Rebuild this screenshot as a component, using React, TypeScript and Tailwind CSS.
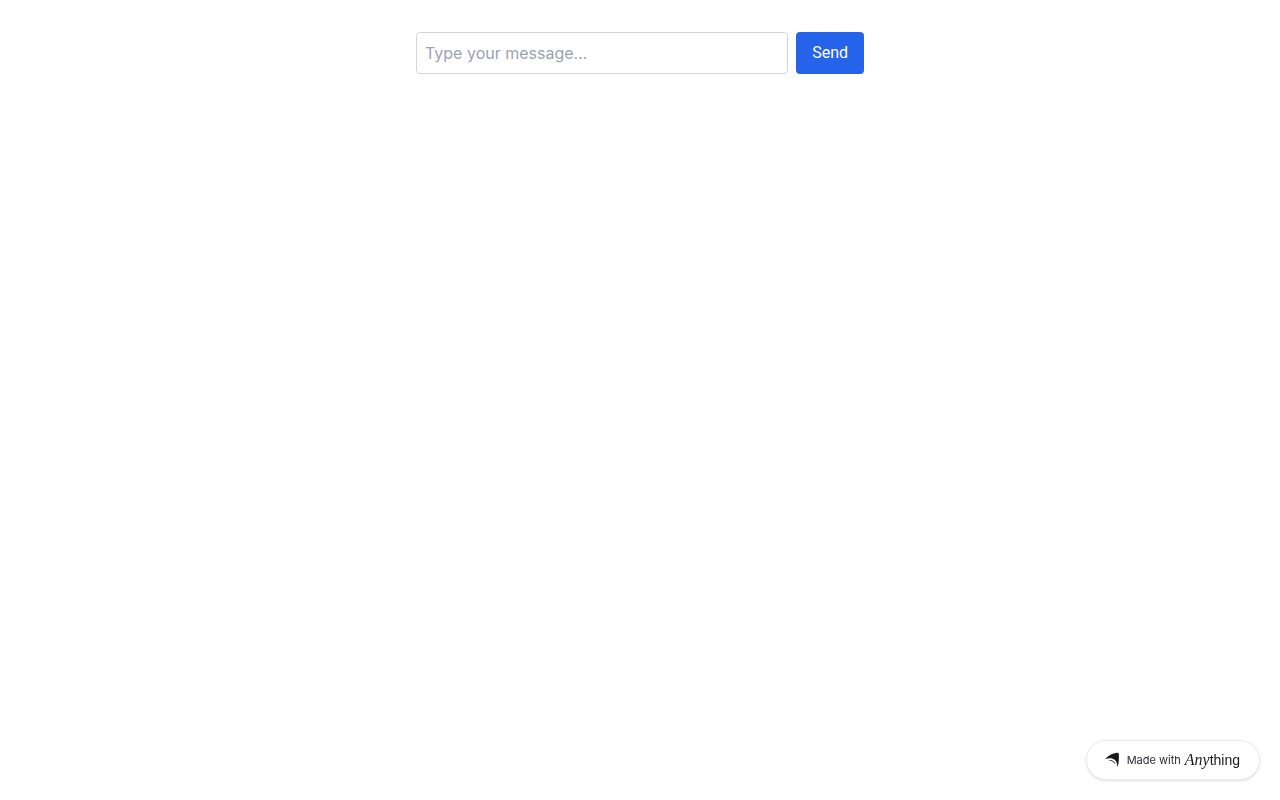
export default function App() {
  return (
    <div className="flex min-h-screen flex-col bg-white font-['Inter',sans-serif]">
      <main className="mx-auto w-full max-w-md grow pt-8">
        <form className="flex gap-2" onSubmit={(e) => e.preventDefault()}>
          <input
            type="text"
            aria-label="Message"
            placeholder="Type your message..."
            className="min-w-0 flex-1 rounded border border-[#d1d5db] bg-white p-2 text-base text-gray-900 placeholder:text-[#9ca3af]"
          />
          <button type="submit" className="rounded bg-[#2563eb] px-4 py-2 font-['Roboto',sans-serif] text-base text-white">
            Send
          </button>
        </form>
      </main>
      <a
        href="#anything"
        className="fixed right-5 bottom-5 flex h-10 items-center rounded-full border border-[#ebebeb] bg-white pr-[19px] pl-[18px] text-[#18191b] shadow-sm"
      >
        <svg viewBox="0 0 14 16" className="mr-2 h-4 w-3.5" fill="currentColor" aria-hidden="true">
          <path d="M0 7C3.2 3.8 7.2 1.2 12 .8Q13.9.6 13.9 2.6C14 7 13.8 11 12.6 15.2C12.2 10.5 10.7 7.7 7.8 6.7C5.4 5.9 2.7 6.2 0 7Z" />
          <path d="M3.2 8.1C6.7 7.4 9.8 9.1 10.8 12.8C8.9 10.1 6.4 8.8 3.2 8.1Z" />
        </svg>
        <span className="mr-1 font-['Inter',sans-serif] text-[11px] text-[#2b2b36]">Made with</span>
        <span className="flex items-baseline leading-5">
          <span className="font-['Liberation_Serif',serif] text-base italic">Any</span>
          <span className="font-['Liberation_Sans',sans-serif] text-sm">thing</span>
        </span>
      </a>
    </div>
  );
}
